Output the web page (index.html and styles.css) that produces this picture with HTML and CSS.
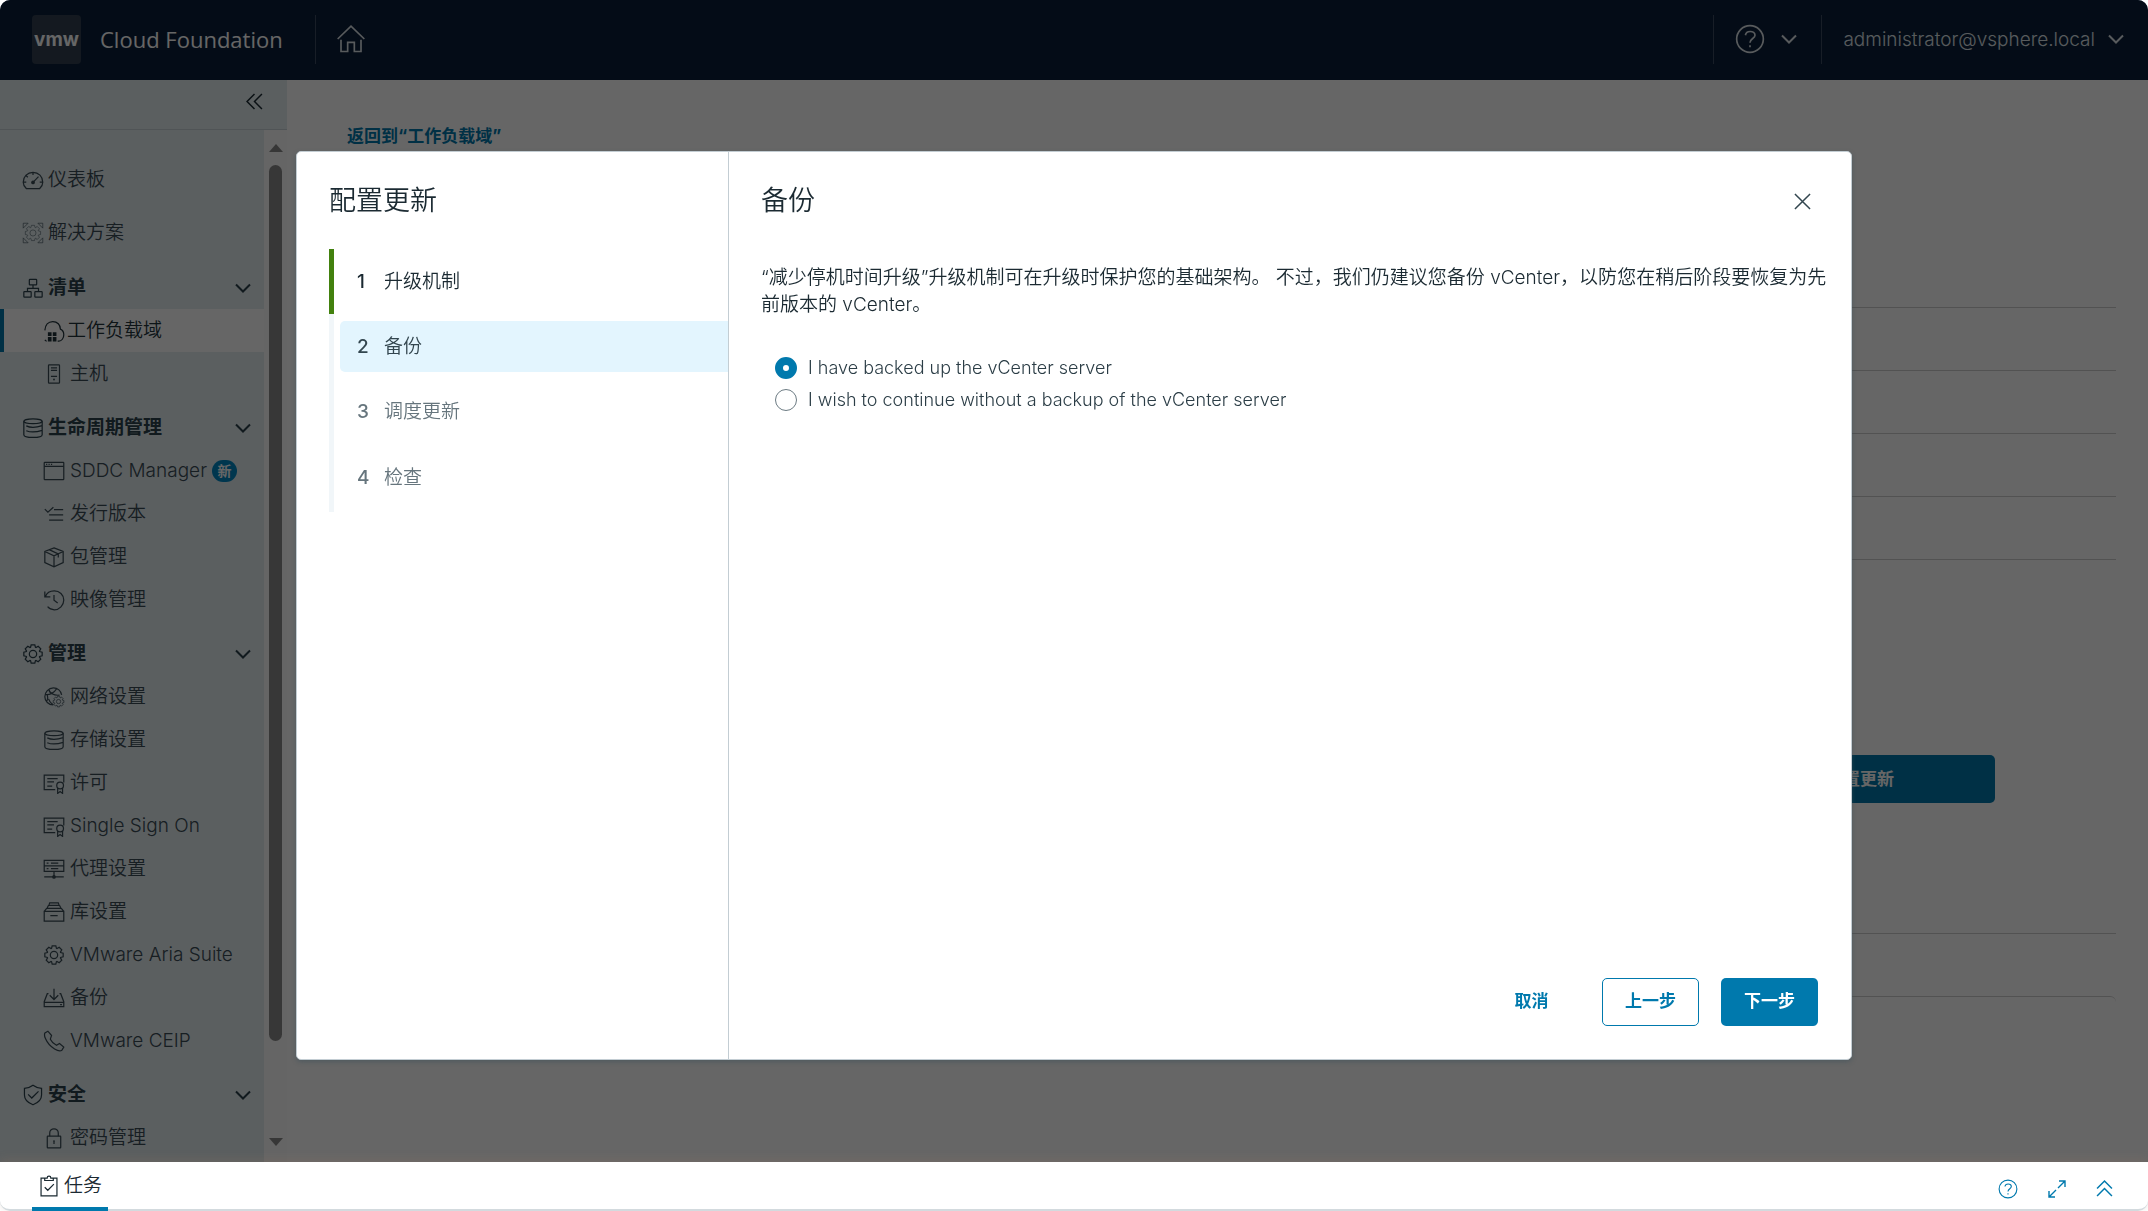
FILE: index.html
```html
<!DOCTYPE html>
<html lang="zh-CN">
<head>
<meta charset="utf-8">
<meta name="viewport" content="width=device-width, initial-scale=1">
<title>Cloud Foundation</title>
<link rel="stylesheet" href="styles.css">
</head>
<body>
<svg class="sprite" aria-hidden="true">
  <symbol id="i-home" viewBox="0 0 36 36"><path d="M2 18 18 2.500 34 18M6 19V33H14V22H22V33H30V19"/></symbol>
  <symbol id="i-help" viewBox="0 0 36 36"><circle cx="18" cy="18" r="16"/><path d="M12.500 13.500C13 10.500 15 9 18.200 9S24 10.800 24 13.500C24 17.500 18 17.500 18 22.500M18 25.500V28"/></symbol>
  <symbol id="i-down" viewBox="0 0 16 10"><path d="M1 1.500 8 8.500 15 1.500"/></symbol>
  <symbol id="i-collapse" viewBox="0 0 16 16"><path stroke-width="1.400" d="M8 1 1 8 8 15M15 1 8 8 15 15"/></symbol>
  <symbol id="i-expand-up" viewBox="0 0 16 16"><path stroke-width="1.400" d="M1 8 8 1 15 8M1 15 8 8 15 15"/></symbol>
  <symbol id="i-resize" viewBox="0 0 20 20"><path stroke-width="1.400" d="M12 2H18V8M18 2 11 9M8 18H2V12M2 18 9 11"/></symbol>
  <symbol id="i-close" viewBox="0 0 18 18"><path stroke-width="1.600" d="M1 1 17 17M17 1 1 17"/></symbol>
  <symbol id="i-dashboard" viewBox="0 0 36 36"><path d="M7 32C4 29 2 25.500 2 21.500 2 12.500 9 5.500 18 5.500S34 12.500 34 21.500C34 25.500 32 29 29 32ZM18 6V10M7 11 9.500 13.500M3 21.500H7M29 21.500H33"/><path d="M18 22 27 12.500"/><circle class="solid" cx="18" cy="22" r="3"/></symbol>
  <symbol id="i-solutions" viewBox="0 0 36 36"><path d="M2 10V2H10ZM26 2H34V10ZM2 26V34H10ZM34 26V34H26Z"/><g transform="translate(3 3) scale(.83)"><use href="#p-gear"/></g></symbol>
  <symbol id="i-tree" viewBox="0 0 36 36"><rect x="12" y="4" width="12" height="9" rx="1"/><rect x="3" y="24" width="12" height="9" rx="1"/><rect x="21" y="24" width="12" height="9" rx="1"/><path d="M18 13V18.500M9 24V18.500H27V24"/></symbol>
  <symbol id="i-domain" viewBox="0 0 36 36"><path d="M3 17C3.500 8.500 8.500 2.500 16 2.500S28.500 8 28.500 15C32 16.500 34 19.500 34 24 34 30 30.500 34.500 26 34.500H24M3 32.500C3.800 33.500 5 34.500 6 34.500"/><path class="solid" d="M8 20H14V26H8ZM16 20H22V26H16ZM8 28H14V35H8ZM16 28H22V35H16Z"/></symbol>
  <symbol id="i-host" viewBox="0 0 36 36"><rect x="9" y="3" width="18" height="30" rx="1"/><path d="M13 8H23M13 12H23M13 22H23"/><circle class="solid" cx="18" cy="27" r="1.500"/></symbol>
  <symbol id="i-storage" viewBox="0 0 36 36"><ellipse cx="18" cy="7" rx="15" ry="4"/><path d="M3 7V29C3 31.500 9 33.500 18 33.500S33 31.500 33 29V7M7 14.500C13 17.500 23 17.500 33 14M7 22.500C13 25 23 25 33 22"/></symbol>
  <symbol id="i-window" viewBox="0 0 36 36"><rect x="2" y="4" width="32" height="28" rx="1"/><path d="M2 10.500H34M5 7.200H7M9 7.200H11M13 7.200H15"/></symbol>
  <symbol id="i-list" viewBox="0 0 36 36"><path d="M3 10 8 15 17 7M18 11H33M10 19.500H33M10 28H33"/></symbol>
  <symbol id="i-package" viewBox="0 0 36 36"><path d="M18 3 33 9V27L18 34 3 27V9ZM3 9 18 16 33 9M18 16V34M10 6 25 13V19"/></symbol>
  <symbol id="i-history" viewBox="0 0 36 36"><path d="M3 4V13H12M4 12.500C6 6.500 12 3 18.500 3 27 3 34 9.500 34 18S27 34 18.500 34C14 34 10 32 7.500 29M18 10V18.500L24 23"/></symbol>
  <symbol id="i-gear" viewBox="0 0 36 36"><g id="p-gear"><path d="M14 7.200 15 3H21L22 7.200 22.800 7.500 26.500 5.300 30.700 9.500 28.500 13.200 28.800 14 33 15V21L28.800 22 28.500 22.800 30.700 26.500 26.500 30.700 22.800 28.500 22 28.800 21 33H15L14 28.800 13.200 28.500 9.500 30.700 5.300 26.500 7.500 22.800 7.200 22 3 21V15L7.200 14 7.500 13.200 5.300 9.500 9.500 5.300 13.200 7.500Z"/><circle cx="18" cy="18" r="6"/></g></symbol>
  <symbol id="i-network" viewBox="0 0 36 36"><path d="M17 31C9 31 3 25 3 17.500S9 3 17 3C24 3 29.500 8 30.500 14.500M4 14C10 15 18 12 22 5M10 5C9 11 18 16 27 15M6 26C9 20 8 17 7 14M17 31C13 28 10 25 9 21"/><g transform="translate(15 15) scale(.58)"><use href="#p-gear"/></g></symbol>
  <symbol id="i-cert" viewBox="0 0 36 36"><path d="M20 29H2V5H34V17M7 11H24M7 16H18M7 23H15"/><circle cx="28" cy="22" r="5.500"/><path d="M24 26V35L28 32 32 35V26"/></symbol>
  <symbol id="i-proxy" viewBox="0 0 36 36"><path d="M2 4H34V22H2ZM2 13H34M6 8.500H9M13 8.500H25M6 17.500H9M13 17.500H25M18 22V31M2 31H34"/><circle class="solid" cx="18" cy="31" r="3"/></symbol>
  <symbol id="i-library" viewBox="0 0 36 36"><path d="M2 17H34V33H2ZM2 17 6 12H30L34 17M7 11 9 7H27L29 11M10 6 11 3H25L26 6M12 24H24"/></symbol>
  <symbol id="i-backup" viewBox="0 0 36 36"><path d="M18 3V20M11 13.500 18 20.500 25 13.500M9 11H7L2 24V32H34V24L29 11H27M2 25H34M28 29H31"/></symbol>
  <symbol id="i-phone" viewBox="0 0 36 36"><path d="M3 5 8 2 14 9 12 15C14 19 18 23 22 25L27 22 34 28 31 33C28 35 24 34 19 31 12 27 7 21 4 14 2 10 2 8 3 5Z"/></symbol>
  <symbol id="i-shield" viewBox="0 0 36 36"><path d="M18 2C22 5 27 7 32 7V18C32 25 26 31 18 34 10 31 4 25 4 18V7C9 7 14 5 18 2ZM10 17 16 23 27 12"/></symbol>
  <symbol id="i-lock" viewBox="0 0 36 36"><rect x="7" y="15" width="22" height="19" rx="1"/><path d="M11 15V10C11 6 14 3 18 3S25 6 25 10V15M18 24V28"/><circle class="solid" cx="18" cy="23" r="1.500"/></symbol>
  <symbol id="i-tasks" viewBox="0 0 36 36"><path d="M11 5H5V34H31V5H25M11 9V5H15C15 3.500 16 2 18 2S21 3.500 21 5H25V9ZM11 20 16 25 26 15"/></symbol>
</svg>

<div class="shell">
  <header class="topbar">
    <a class="brand" href="#"><span class="brand-mark">vmw</span><span class="brand-name">Cloud Foundation</span></a>
    <a class="home" href="#" aria-label="主页"><svg class="icon icon-lg"><use href="#i-home"/></svg></a>
    <button class="top-action help" type="button" aria-label="帮助"><svg class="icon icon-lg"><use href="#i-help"/></svg><svg class="chevron"><use href="#i-down"/></svg></button>
    <button class="top-action user" type="button">administrator@vsphere.local<svg class="chevron"><use href="#i-down"/></svg></button>
  </header>

  <div class="body">
    <aside class="sidebar">
      <div class="sidebar-head"><button class="collapse" type="button" aria-label="折叠"><svg class="icon icon-sm"><use href="#i-collapse"/></svg></button></div>
      <div class="sidebar-body">
        <nav class="nav">
          <a class="nav-top" href="#"><svg class="icon"><use href="#i-dashboard"/></svg>仪表板</a>
          <a class="nav-top" href="#"><svg class="icon thin"><use href="#i-solutions"/></svg>解决方案</a>

          <button class="nav-group first" type="button"><svg class="icon"><use href="#i-tree"/></svg>清单<svg class="chevron"><use href="#i-down"/></svg></button>
          <a class="nav-item active" href="#"><svg class="icon"><use href="#i-domain"/></svg>工作负载域</a>
          <a class="nav-item" href="#"><svg class="icon"><use href="#i-host"/></svg>主机</a>

          <button class="nav-group" type="button"><svg class="icon"><use href="#i-storage"/></svg>生命周期管理<svg class="chevron"><use href="#i-down"/></svg></button>
          <a class="nav-item" href="#"><svg class="icon"><use href="#i-window"/></svg>SDDC Manager<span class="badge">新</span></a>
          <a class="nav-item" href="#"><svg class="icon"><use href="#i-list"/></svg>发行版本</a>
          <a class="nav-item" href="#"><svg class="icon"><use href="#i-package"/></svg>包管理</a>
          <a class="nav-item" href="#"><svg class="icon"><use href="#i-history"/></svg>映像管理</a>

          <button class="nav-group" type="button"><svg class="icon"><use href="#i-gear"/></svg>管理<svg class="chevron"><use href="#i-down"/></svg></button>
          <a class="nav-item" href="#"><svg class="icon"><use href="#i-network"/></svg>网络设置</a>
          <a class="nav-item" href="#"><svg class="icon"><use href="#i-storage"/></svg>存储设置</a>
          <a class="nav-item" href="#"><svg class="icon"><use href="#i-cert"/></svg>许可</a>
          <a class="nav-item" href="#"><svg class="icon"><use href="#i-cert"/></svg>Single Sign On</a>
          <a class="nav-item" href="#"><svg class="icon"><use href="#i-proxy"/></svg>代理设置</a>
          <a class="nav-item" href="#"><svg class="icon"><use href="#i-library"/></svg>库设置</a>
          <a class="nav-item" href="#"><svg class="icon"><use href="#i-gear"/></svg>VMware Aria Suite</a>
          <a class="nav-item" href="#"><svg class="icon"><use href="#i-backup"/></svg>备份</a>
          <a class="nav-item" href="#"><svg class="icon"><use href="#i-phone"/></svg>VMware CEIP</a>

          <button class="nav-group" type="button"><svg class="icon"><use href="#i-shield"/></svg>安全<svg class="chevron"><use href="#i-down"/></svg></button>
          <a class="nav-item" href="#"><svg class="icon"><use href="#i-lock"/></svg>密码管理</a>
        </nav>
        <div class="scrollbar" aria-hidden="true">
          <span class="arrow arrow-up"></span>
          <span class="track"><span class="thumb"></span></span>
          <span class="arrow arrow-down"></span>
        </div>
      </div>
    </aside>

    <main class="main">
      <a class="back-link" href="#">返回到“工作负载域”</a>
      <div class="details"><div class="detail-row"></div><div class="detail-row"></div><div class="detail-row"></div><div class="detail-row"></div></div>
      <div class="actions"><button class="btn primary wide" type="button">配置更新</button></div>
      <div class="section-head"></div>
      <div class="panel"></div>
    </main>
  </div>
  <div class="backdrop"></div>
</div>

<footer class="taskbar">
  <button class="task-tab" type="button"><svg class="icon"><use href="#i-tasks"/></svg>任务</button>
  <div class="task-tools">
    <button type="button" aria-label="帮助"><svg class="icon icon-md"><use href="#i-help"/></svg></button>
    <button type="button" aria-label="最大化"><svg class="icon icon-md"><use href="#i-resize"/></svg></button>
    <button type="button" aria-label="展开"><svg class="icon icon-sm"><use href="#i-expand-up"/></svg></button>
  </div>
</footer>

<div class="modal" role="dialog" aria-modal="true" aria-labelledby="wizard-title">
  <div class="wizard-nav">
    <h1 class="title" id="wizard-title">配置更新</h1>
    <ol class="steps">
      <li class="step done"><button type="button"><span class="num">1</span>升级机制</button></li>
      <li class="step current"><button type="button"><span class="num">2</span>备份</button></li>
      <li class="step"><button type="button"><span class="num">3</span>调度更新</button></li>
      <li class="step"><button type="button"><span class="num">4</span>检查</button></li>
    </ol>
  </div>
  <section class="wizard-page">
    <div class="page-head">
      <h2 class="title">备份</h2>
      <button class="close" type="button" aria-label="关闭"><svg class="icon icon-sm"><use href="#i-close"/></svg></button>
    </div>
    <div class="page-body">
      <p class="intro">“减少停机时间升级”升级机制可在升级时保护您的基础架构。 不过，我们仍建议您备份 vCenter，以防您在稍后阶段要恢复为先前版本的 vCenter。</p>
      <div class="choices">
        <label class="choice"><input type="radio" name="backup" checked>I have backed up the vCenter server</label>
        <label class="choice"><input type="radio" name="backup">I wish to continue without a backup of the vCenter server</label>
      </div>
    </div>
    <div class="page-foot">
      <button class="btn link" type="button">取消</button>
      <button class="btn outline" type="button">上一步</button>
      <button class="btn primary" type="button">下一步</button>
    </div>
  </section>
</div>
</body>
</html>
```
FILE: styles.css
```css
* {
  box-sizing: border-box;
}

body {
  display: flex;
  flex-direction: column;
  height: 100vh;
  margin: 0;
  overflow: hidden;
  background: #fff;
  color: #1b2a32;
  font-family: Inter, "Noto Sans CJK SC", sans-serif;
  font-size: 18px;
  font-weight: 350;
  line-height: 27px;
}

a {
  color: inherit;
  text-decoration: none;
}

button {
  padding: 0;
  border: 0;
  background: none;
  color: inherit;
  font: inherit;
}

.sprite {
  position: absolute;
  width: 0;
  height: 0;
}

.icon {
  flex: none;
  width: 22px;
  height: 22px;
  fill: none;
  stroke: currentColor;
  stroke-width: 2;
}

.solid {
  fill: currentColor;
  stroke: none;
}

.icon-lg {
  width: 30px;
  height: 30px;
}

.icon-md {
  width: 20px;
  height: 20px;
}

.icon-sm {
  width: 17px;
  height: 17px;
}

.thin {
  stroke-width: 1;
}

.chevron {
  flex: none;
  width: 16px;
  height: 10px;
  fill: none;
  stroke: currentColor;
  stroke-width: 2;
}

/* Application shell */

.shell {
  position: relative;
  display: flex;
  flex: 1;
  flex-direction: column;
  min-height: 0;
  overflow: hidden;
  border-radius: 10px 10px 0 0;
}

.backdrop {
  position: absolute;
  inset: 0;
  background: rgba(0, 0, 0, 0.6);
}

.topbar {
  display: flex;
  flex: none;
  align-items: center;
  height: 80px;
  padding: 0 24px 2px 32px;
  background: #0c203a;
  color: #fff;
}

.brand {
  display: flex;
  align-items: center;
  height: 49px;
  padding-right: 32px;
  border-right: 1px solid #3d4d61;
}

.brand-mark {
  display: grid;
  place-items: center;
  width: 49px;
  height: 49px;
  margin-right: 19px;
  border-radius: 4px;
  background: #324052;
  font-size: 19px;
  font-weight: 700;
}

.brand-name {
  font-family: "Open Sans", sans-serif;
  font-size: 22px;
  font-weight: 400;
}

.home {
  display: flex;
  margin: 0 auto 0 20px;
  color: #dde3e8;
}

.top-action {
  display: flex;
  align-items: center;
  height: 49px;
  padding-left: 21px;
  border-left: 1px solid #3d4d61;
  color: #dde3e8;
}

.help {
  gap: 16px;
  padding-right: 24px;
}

.user {
  gap: 13px;
  font-size: 19px;
}

.body {
  display: flex;
  flex: 1;
  min-height: 0;
}

/* Sidebar */

.sidebar {
  display: flex;
  flex: none;
  flex-direction: column;
  width: 287px;
}

.sidebar-head {
  display: flex;
  flex: none;
  align-items: center;
  justify-content: flex-end;
  height: 50px;
  padding: 0 24px 6px 0;
  border-bottom: 1px solid #c8d3d8;
  background: #e3edf0;
}

.collapse {
  display: flex;
}

.sidebar-body {
  display: flex;
  flex: 1;
  min-height: 0;
}

.nav {
  display: flex;
  flex: 1;
  flex-direction: column;
  padding-top: 23px;
  overflow: hidden;
  background: #e3edf0;
  color: #3a4c56;
  font-size: 19px;
}

.nav-top,
.nav-group,
.nav-item {
  display: flex;
  flex: none;
  align-items: center;
  height: 43px;
  padding-left: 22px;
  gap: 4px;
}

.nav-top {
  height: 53px;
}

.nav-group {
  margin-top: 11px;
  padding-right: 13px;
  color: #2c414c;
  font-weight: 700;
}

.nav-group.first {
  margin-top: 7px;
}

.nav-group .chevron {
  margin-left: auto;
}

.nav-item {
  padding-left: 43px;
  gap: 5px;
}

.nav-item.active {
  padding-left: 39px;
  gap: 2px;
  border-left: 4px solid #0079ad;
  background: #fff;
  color: #21333b;
}

.badge {
  display: grid;
  place-items: center;
  width: 25px;
  height: 22px;
  border-radius: 11px;
  background: #0088c4;
  color: #fff;
  font-size: 14px;
  font-weight: 700;
  line-height: 22px;
}

.scrollbar {
  display: flex;
  flex: none;
  flex-direction: column;
  align-items: center;
  width: 23px;
  padding: 14px 0 16px;
  background: #fcfcfc;
}

.arrow {
  border: 7px solid transparent;
}

.arrow-up {
  border-top: 0;
  border-bottom: 8px solid #8a8a8a;
}

.arrow-down {
  border-top: 8px solid #8a8a8a;
  border-bottom: 0;
}

.track {
  flex: 1;
  width: 13px;
  padding-top: 13px;
}

.thumb {
  display: block;
  height: 90%;
  border-radius: 7px;
  background: #8a8a8a;
}

/* Page behind the dialog */

.main {
  flex: 1;
  padding: 43px 32px 0 60px;
  background: #fff;
}

.back-link {
  display: block;
  color: #0079ad;
  font-size: 17px;
  font-weight: 700;
}

.details {
  margin-top: 157px;
  border-top: 1px solid #ccc;
}

.detail-row {
  height: 63px;
  border-bottom: 1px solid #ccc;
}

.actions {
  display: flex;
  justify-content: flex-end;
  padding: 195px 121px 130px 0;
}

.section-head {
  height: 63px;
  border-top: 1px solid #ccc;
}

.panel {
  height: 80px;
  border-top: 1px solid #ccc;
  border-radius: 6px;
}

.btn {
  min-width: 97px;
  height: 48px;
  border: 1px solid transparent;
  border-radius: 5px;
  font-size: 17px;
  font-weight: 700;
}

.btn.primary {
  background: #0079ad;
  color: #fff;
}

.btn.outline {
  border-color: #0079ad;
  color: #0079ad;
}

.btn.link {
  color: #0079ad;
}

.btn.wide {
  width: 270px;
}

/* Task bar */

.taskbar {
  position: relative;
  display: flex;
  flex: none;
  justify-content: space-between;
  height: 49px;
  padding: 0 35px 0 32px;
  border-bottom: 2px solid #d3dade;
  border-radius: 0 0 10px 10px;
  background: #fff;
  box-shadow: 0 -2px 10px rgba(150, 120, 100, 0.25);
}

.task-tab {
  display: flex;
  align-items: center;
  height: 49px;
  padding: 2px 6px 0 6px;
  gap: 4px;
  border-bottom: 4px solid #0079ad;
  font-size: 19px;
}

.task-tools {
  display: flex;
  align-items: center;
  gap: 29px;
  padding-top: 6px;
  color: #0079ad;
}

.task-tools button {
  display: flex;
}

/* Wizard dialog */

.modal {
  position: fixed;
  inset: 0;
  display: flex;
  width: min(1556px, 92vw);
  height: 75vh;
  margin: auto;
  border: 1px solid #c3cdd3;
  border-radius: 5px;
  background: #fff;
  box-shadow: 0 2px 4px rgba(60, 80, 90, 0.5);
}

.title {
  margin: 0;
  color: #1b2a32;
  font-size: 27px;
  font-weight: 350;
  line-height: 36px;
}

.wizard-nav {
  flex: none;
  width: 432px;
  padding: 31px 0 0 32px;
  border-right: 1px solid #c3cdd3;
}

.steps {
  margin: 30px 0 0;
  padding: 0;
  list-style: none;
}

.step {
  display: flex;
  align-items: center;
  height: 65px;
  padding-left: 6px;
  border-left: 5px solid #f1f6f9;
  color: #66757d;
  font-size: 19px;
}

.step:last-child {
  padding-bottom: 2px;
  height: 68px;
}

.step button {
  display: flex;
  flex: 1;
  align-items: center;
  height: 51px;
  padding-left: 17px;
  border-radius: 5px 0 0 5px;
}

.num {
  width: 27px;
  font-weight: 500;
  text-align: left;
}

.step.done {
  border-left-color: #42810e;
  color: #1b2a32;
}

.step.current {
  color: #33464f;
}

.step.current button {
  background: #e3f5fe;
}

.wizard-page {
  display: flex;
  flex: 1;
  flex-direction: column;
  padding: 31px 20px 33px 32px;
}

.page-head {
  display: flex;
  align-items: center;
  justify-content: space-between;
}

.close {
  display: flex;
  padding-right: 20px;
  color: #33464f;
}

.page-body {
  flex: 1;
  margin-top: 45px;
}

.intro {
  margin: 0;
  font-size: 19px;
}

.choices {
  display: grid;
  gap: 5px;
  margin: 36px 14px 0;
}

.choice {
  display: flex;
  align-items: center;
  gap: 11px;
  color: #2b3d46;
}

.choice input {
  appearance: none;
  width: 22px;
  height: 22px;
  margin: 0;
  border: 1px solid #6c7b83;
  border-radius: 50%;
}

.choice input:checked {
  border: 8px solid #0079ad;
}

.page-foot {
  display: flex;
  justify-content: flex-end;
  padding-right: 13px;
  gap: 22px;
}
```
